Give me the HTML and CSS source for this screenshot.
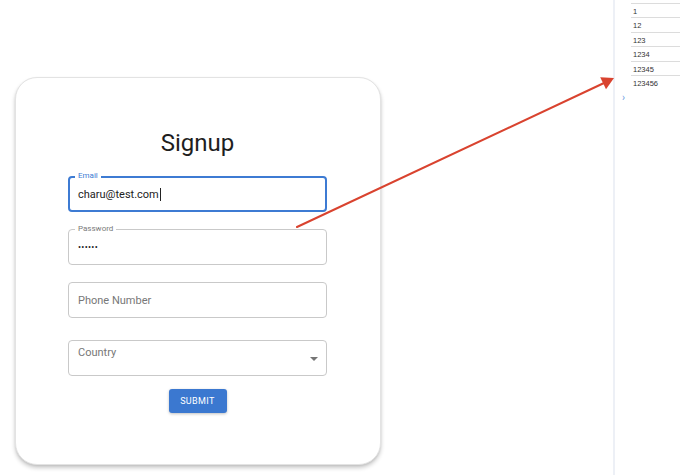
FILE: index.html
```html
<!DOCTYPE html>
<html>
<head>
<meta charset="utf-8">
<link rel="stylesheet" href="styles.css">
</head>
<body>
<div class="page">
  <main class="main">
    <section class="card">
      <h1 class="title">Signup</h1>
      <div class="field field-focused field-email">
        <span class="label label-blue">Email</span>
        <span class="value">charu@test.com</span><span class="caret"></span>
      </div>
      <div class="field field-password">
        <span class="label">Password</span>
        <span class="dots">••••••</span>
      </div>
      <div class="field field-phone">
        <span class="placeholder">Phone Number</span>
      </div>
      <div class="field field-select">
        <span class="placeholder select-label">Country</span>
        <svg class="select-arrow" width="8" height="4" viewBox="0 0 8 4"><path d="M0 0 L8 0 L4 4 Z" fill="#757575"/></svg>
      </div>
      <div class="actions">
        <button class="submit">SUBMIT</button>
      </div>
    </section>
  </main>
  <aside class="side">
    <div class="rows">
      <div class="row"></div>
      <div class="row">1</div>
      <div class="row">12</div>
      <div class="row">123</div>
      <div class="row">1234</div>
      <div class="row">12345</div>
      <div class="row">123456</div>
    </div>
    <div class="chev">›</div>
  </aside>
</div>
<svg class="arrow" width="680" height="475" viewBox="0 0 680 475">
  <line x1="297" y1="227" x2="604" y2="83" stroke="#d9432f" stroke-width="2" stroke-linecap="round"/>
  <polygon points="614,78 600.2,77.2 606,89.3" fill="#d9432f"/>
</svg>
</body>
</html>
```
FILE: styles.css
```css
html, body {
  margin: 0;
  padding: 0;
  background: #ffffff;
}
body {
  width: 680px;
  height: 475px;
  overflow: hidden;
  position: relative;
  font-family: Roboto, "Liberation Sans", sans-serif;
}
.page {
  display: flex;
  height: 475px;
}
.main {
  width: 613px;
  flex: none;
}
.card {
  margin: 77px 0 0 15px;
  width: 366px;
  height: 388px;
  box-sizing: border-box;
  border-radius: 22px;
  border: 1px solid #e3e3e3;
  box-shadow: 0 3px 4px rgba(0,0,0,0.2), 0 1px 2px rgba(0,0,0,0.08);
  padding: 51px 53px 0 52px;
  display: flex;
  flex-direction: column;
  background: #fff;
}
.title {
  margin: 0;
  font-weight: 400;
  font-size: 24px;
  line-height: 28px;
  text-align: center;
  color: #1e1e1e;
}
.field {
  position: relative;
  height: 36px;
  box-sizing: border-box;
  border: 1px solid #c9c9c9;
  border-radius: 4px;
  display: flex;
  align-items: center;
  padding-left: 9px;
  font-size: 11px;
  color: #222;
}
.field-email {
  margin-top: 19px;
}
.field-focused {
  border: 2px solid #3d7bd3;
  padding-left: 8px;
}
.field-password {
  margin-top: 17px;
}
.field-phone {
  margin-top: 17px;
}
.field-select {
  margin-top: 22px;
  align-items: flex-start;
  padding-top: 5px;
}
.label {
  position: absolute;
  top: -6px;
  left: 6px;
  padding: 0 3px;
  background: #fff;
  font-size: 8px;
  line-height: 10px;
  color: #7a7a7a;
}
.field-focused .label {
  top: -7px;
  left: 5px;
}
.label-blue {
  color: #3d7bd3;
}
.value {
  color: #222;
}
.caret {
  width: 1px;
  height: 13px;
  background: #222;
  margin-left: 1px;
}
.dots {
  font-size: 9px;
  letter-spacing: 0.3px;
  color: #222;
}
.placeholder {
  color: #777;
}
.select-label {
  line-height: 13px;
}
.select-arrow {
  position: absolute;
  right: 8px;
  top: 16px;
}
.actions {
  margin-top: 13px;
  display: flex;
  justify-content: center;
}
.submit {
  width: 58px;
  height: 24px;
  border: none;
  border-radius: 3px;
  background: #3b78d0;
  color: #fff;
  font-family: Roboto, "Liberation Sans", sans-serif;
  font-size: 9px;
  letter-spacing: 0.4px;
  padding: 0;
  box-shadow: 0 1px 3px rgba(0,0,0,0.25);
}
.side {
  flex: 1;
  border-left: 2px solid #edf0f6;
  position: relative;
}
.rows {
  margin-left: 16px;
}
.row {
  height: 11.4px;
  padding-top: 2px;
  border-bottom: 1px solid #dcdcdc;
  font-family: "Liberation Sans", sans-serif;
  font-size: 7.5px;
  line-height: 12px;
  padding-left: 2px;
  color: #333;
}
.row:first-child {
  height: 3px;
  padding-top: 0;
}
.row:last-child {
  border-bottom: none;
}
.chev {
  margin: 3px 0 0 7px;
  font-size: 10px;
  line-height: 12px;
  color: #6b9be0;
}
.arrow {
  position: absolute;
  left: 0;
  top: 0;
  pointer-events: none;
}
```
